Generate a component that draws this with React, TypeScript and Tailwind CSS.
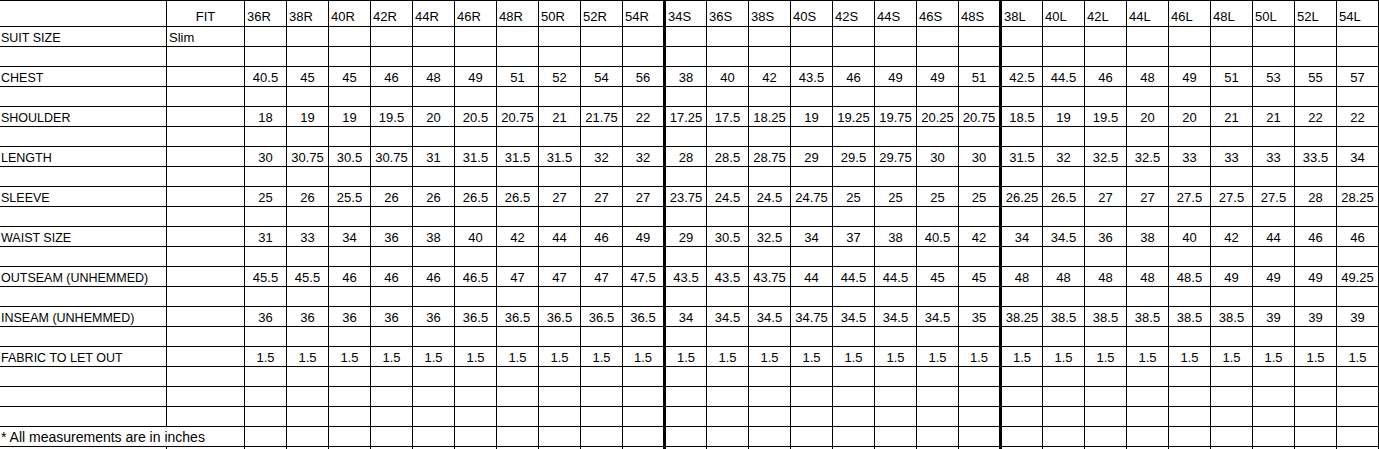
import React from 'react';

const SIZES = [
  '36R', '38R', '40R', '42R', '44R', '46R', '48R', '50R', '52R', '54R',
  '34S', '36S', '38S', '40S', '42S', '44S', '46S', '48S',
  '38L', '40L', '42L', '44L', '46L', '48L', '50L', '52L', '54L',
];

// columns after which a heavy divider is drawn (54R, 48S)
const THICK = new Set([9, 17]);

const MEASUREMENTS: { label: string; values: string[] }[] = [
  {
    label: 'CHEST',
    values: '40.5 45 45 46 48 49 51 52 54 56 38 40 42 43.5 46 49 49 51 42.5 44.5 46 48 49 51 53 55 57'.split(' '),
  },
  {
    label: 'SHOULDER',
    values: '18 19 19 19.5 20 20.5 20.75 21 21.75 22 17.25 17.5 18.25 19 19.25 19.75 20.25 20.75 18.5 19 19.5 20 20 21 21 22 22'.split(' '),
  },
  {
    label: 'LENGTH',
    values: '30 30.75 30.5 30.75 31 31.5 31.5 31.5 32 32 28 28.5 28.75 29 29.5 29.75 30 30 31.5 32 32.5 32.5 33 33 33 33.5 34'.split(' '),
  },
  {
    label: 'SLEEVE',
    values: '25 26 25.5 26 26 26.5 26.5 27 27 27 23.75 24.5 24.5 24.75 25 25 25 25 26.25 26.5 27 27 27.5 27.5 27.5 28 28.25'.split(' '),
  },
  {
    label: 'WAIST SIZE',
    values: '31 33 34 36 38 40 42 44 46 49 29 30.5 32.5 34 37 38 40.5 42 34 34.5 36 38 40 42 44 46 46'.split(' '),
  },
  {
    label: 'OUTSEAM (UNHEMMED)',
    values: '45.5 45.5 46 46 46 46.5 47 47 47 47.5 43.5 43.5 43.75 44 44.5 44.5 45 45 48 48 48 48 48.5 49 49 49 49.25'.split(' '),
  },
  {
    label: 'INSEAM (UNHEMMED)',
    values: '36 36 36 36 36 36.5 36.5 36.5 36.5 36.5 34 34.5 34.5 34.75 34.5 34.5 34.5 35 38.25 38.5 38.5 38.5 38.5 38.5 39 39 39'.split(' '),
  },
  {
    label: 'FABRIC TO LET OUT',
    values: Array.from({ length: 27 }, () => '1.5'),
  },
];

type Align = 'left' | 'center';

function Cell({
  children,
  thick = false,
  align = 'left',
  header = false,
  span2 = false,
}: {
  children?: React.ReactNode;
  thick?: boolean;
  align?: Align;
  header?: boolean;
  span2?: boolean;
}) {
  return (
    <div
      className={[
        'flex items-end overflow-visible whitespace-nowrap border-b border-black leading-[15px]',
        thick ? 'border-r-[3px]' : 'border-r',
        header ? 'h-[26px] pb-[2px]' : 'h-[20px] pb-px',
        align === 'center' ? 'justify-center' : 'justify-start',
        span2 ? 'col-span-2' : '',
      ].join(' ')}
    >
      {children}
    </div>
  );
}

function Label({ children }: { children: React.ReactNode }) {
  return <span className="pl-px text-[12.5px] leading-[14px]">{children}</span>;
}

function BlankRow() {
  return (
    <>
      <Cell />
      <Cell />
      {SIZES.map((s, i) => (
        <Cell key={s} thick={THICK.has(i)} />
      ))}
    </>
  );
}

export default function App() {
  return (
    <div className="h-[449px] w-[1379px] overflow-hidden bg-white text-[13px] text-black [font-family:'Liberation_Sans',Arial,sans-serif]">
      <div className="grid grid-cols-[167px_78px_repeat(9,42px)_43px_41px_repeat(6,42px)_43px_41px_repeat(8,42px)] border-t border-black">
        {/* header */}
        <Cell header />
        <Cell header align="center">
          FIT
        </Cell>
        {SIZES.map((s, i) => (
          <Cell key={s} header thick={THICK.has(i)}>
            <span className="pl-[2px]">{s}</span>
          </Cell>
        ))}

        {/* suit size */}
        <Cell>
          <Label>SUIT SIZE</Label>
        </Cell>
        <Cell>
          <span className="pl-[2px]">Slim</span>
        </Cell>
        {SIZES.map((s, i) => (
          <Cell key={s} thick={THICK.has(i)} />
        ))}

        {MEASUREMENTS.map((m) => (
          <React.Fragment key={m.label}>
            <BlankRow />
            <Cell>
              <Label>{m.label}</Label>
            </Cell>
            <Cell />
            {m.values.map((v, i) => (
              <Cell key={i} align="center" thick={THICK.has(i)}>
                {v}
              </Cell>
            ))}
          </React.Fragment>
        ))}

        <BlankRow />
        <BlankRow />
        <BlankRow />

        {/* footnote */}
        <Cell span2>
          <span className="pl-px text-[14px]">* All measurements are in inches</span>
        </Cell>
        {SIZES.map((s, i) => (
          <Cell key={s} thick={THICK.has(i)} />
        ))}

        <BlankRow />
      </div>
    </div>
  );
}
